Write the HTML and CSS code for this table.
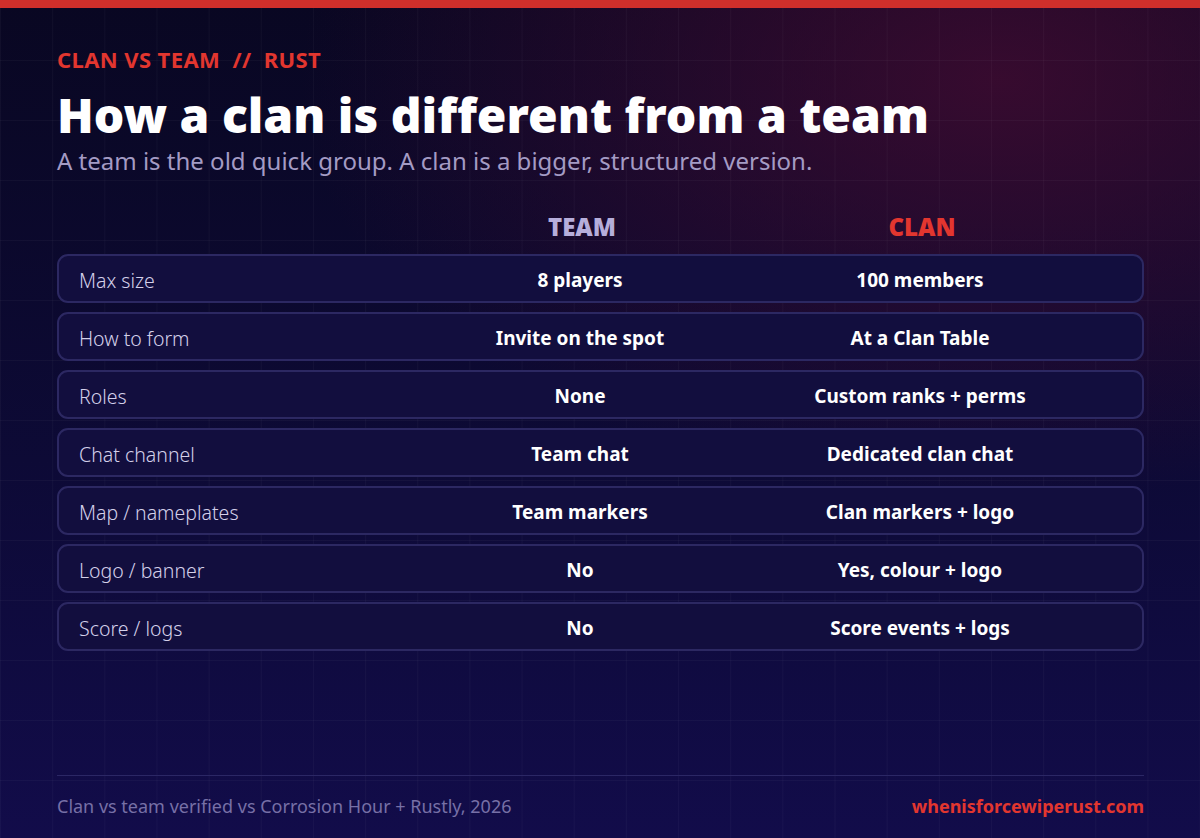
FILE: index.html
```html
<!DOCTYPE html>
<html lang="en">
<head>
<meta charset="utf-8">
<title>Clan vs Team</title>
<link rel="stylesheet" href="styles.css">
</head>
<body>
<div class="page">
  <div class="topbar"></div>
  <div class="content">
    <div class="eyebrow">CLAN VS TEAM &nbsp;//&nbsp; RUST</div>
    <h1 class="title">How a clan is different from a team</h1>
    <p class="subtitle">A team is the old quick group. A clan is a bigger, structured version.</p>

    <div class="table">
      <div class="head">
        <div></div>
        <div class="col-team">TEAM</div>
        <div class="col-clan">CLAN</div>
      </div>
      <div class="row"><div class="label">Max size</div><div class="val">8 players</div><div class="val">100 members</div></div>
      <div class="row"><div class="label">How to form</div><div class="val">Invite on the spot</div><div class="val">At a Clan Table</div></div>
      <div class="row"><div class="label">Roles</div><div class="val">None</div><div class="val">Custom ranks + perms</div></div>
      <div class="row"><div class="label">Chat channel</div><div class="val">Team chat</div><div class="val">Dedicated clan chat</div></div>
      <div class="row"><div class="label">Map / nameplates</div><div class="val">Team markers</div><div class="val">Clan markers + logo</div></div>
      <div class="row"><div class="label">Logo / banner</div><div class="val">No</div><div class="val">Yes, colour + logo</div></div>
      <div class="row"><div class="label">Score / logs</div><div class="val">No</div><div class="val">Score events + logs</div></div>
    </div>

    <div class="footer">
      <span class="source">Clan vs team verified vs Corrosion Hour + Rustly, 2026</span>
      <span class="site">whenisforcewiperust.com</span>
    </div>
  </div>
</div>
</body>
</html>
```

FILE: styles.css
```css
* { box-sizing: border-box; }
html, body { margin: 0; padding: 0; }
body {
  width: 1200px;
  height: 838px;
  overflow: hidden;
  font-family: "Noto Sans", "Open Sans", sans-serif;
  background: #0c0a2c;
}
.page {
  position: relative;
  width: 1200px;
  height: 838px;
  display: flex;
  flex-direction: column;
  background:
    linear-gradient(rgba(255,255,255,0.03) 1px, transparent 1px) 0 0 / 52.17px 60px,
    linear-gradient(90deg, rgba(255,255,255,0.03) 1px, transparent 1px) 0 0 / 52.17px 60px,
    radial-gradient(ellipse 700px 420px at 1000px 80px, rgba(70,12,50,0.75), rgba(70,12,50,0) 100%),
    linear-gradient(180deg, #090722 0%, #0d0a36 55%, #120c4a 100%);
}
.topbar {
  height: 8px;
  background: #cf2f2b;
  flex: none;
}
.content {
  flex: 1;
  display: flex;
  flex-direction: column;
  padding: 36px 56px 0 57px;
}
.eyebrow {
  color: #e2362f;
  font-weight: 700;
  font-size: 22px;
  line-height: 30px;
  letter-spacing: 0.4px;
}
.title {
  margin: 12px 0 0;
  color: #ffffff;
  font-weight: 900;
  font-size: 48px;
  line-height: 58px;
  letter-spacing: 0;
}
.subtitle {
  margin: 2px 0 0;
  color: #a49bc4;
  font-size: 24px;
  line-height: 30px;
  font-weight: 400;
}
.table {
  margin-top: 34px;
  display: flex;
  flex-direction: column;
  gap: 9px;
}
.head, .row {
  display: grid;
  grid-template-columns: 1fr 340px 340px;
  padding: 0 52px 0 20px;
  align-items: center;
}
.head {
  height: 28px;
  margin-bottom: 7px;
  font-weight: 900;
  font-size: 24px;
  text-align: center;
}
.col-team { color: #b6aedb; }
.col-clan { color: #e2362f; }
.row {
  height: 49px;
  padding-top: 3px;
  border: 2px solid #2c2862;
  border-radius: 11px;
  background: #120e3e;
}
.label {
  color: #d4d0ea;
  font-size: 19.5px;
  font-weight: 300;
}
.val {
  color: #ffffff;
  text-align: center;
  font-weight: 700;
  font-size: 19px;
}
.footer {
  margin-top: auto;
  margin-bottom: 20px;
  border-top: 1px solid #2b2765;
  padding-top: 18px;
  display: flex;
  justify-content: space-between;
  align-items: center;
  font-size: 18px;
  line-height: 24px;
}
.source { color: #7770a6; }
.site { color: #e2362f; font-weight: 700; }
```
